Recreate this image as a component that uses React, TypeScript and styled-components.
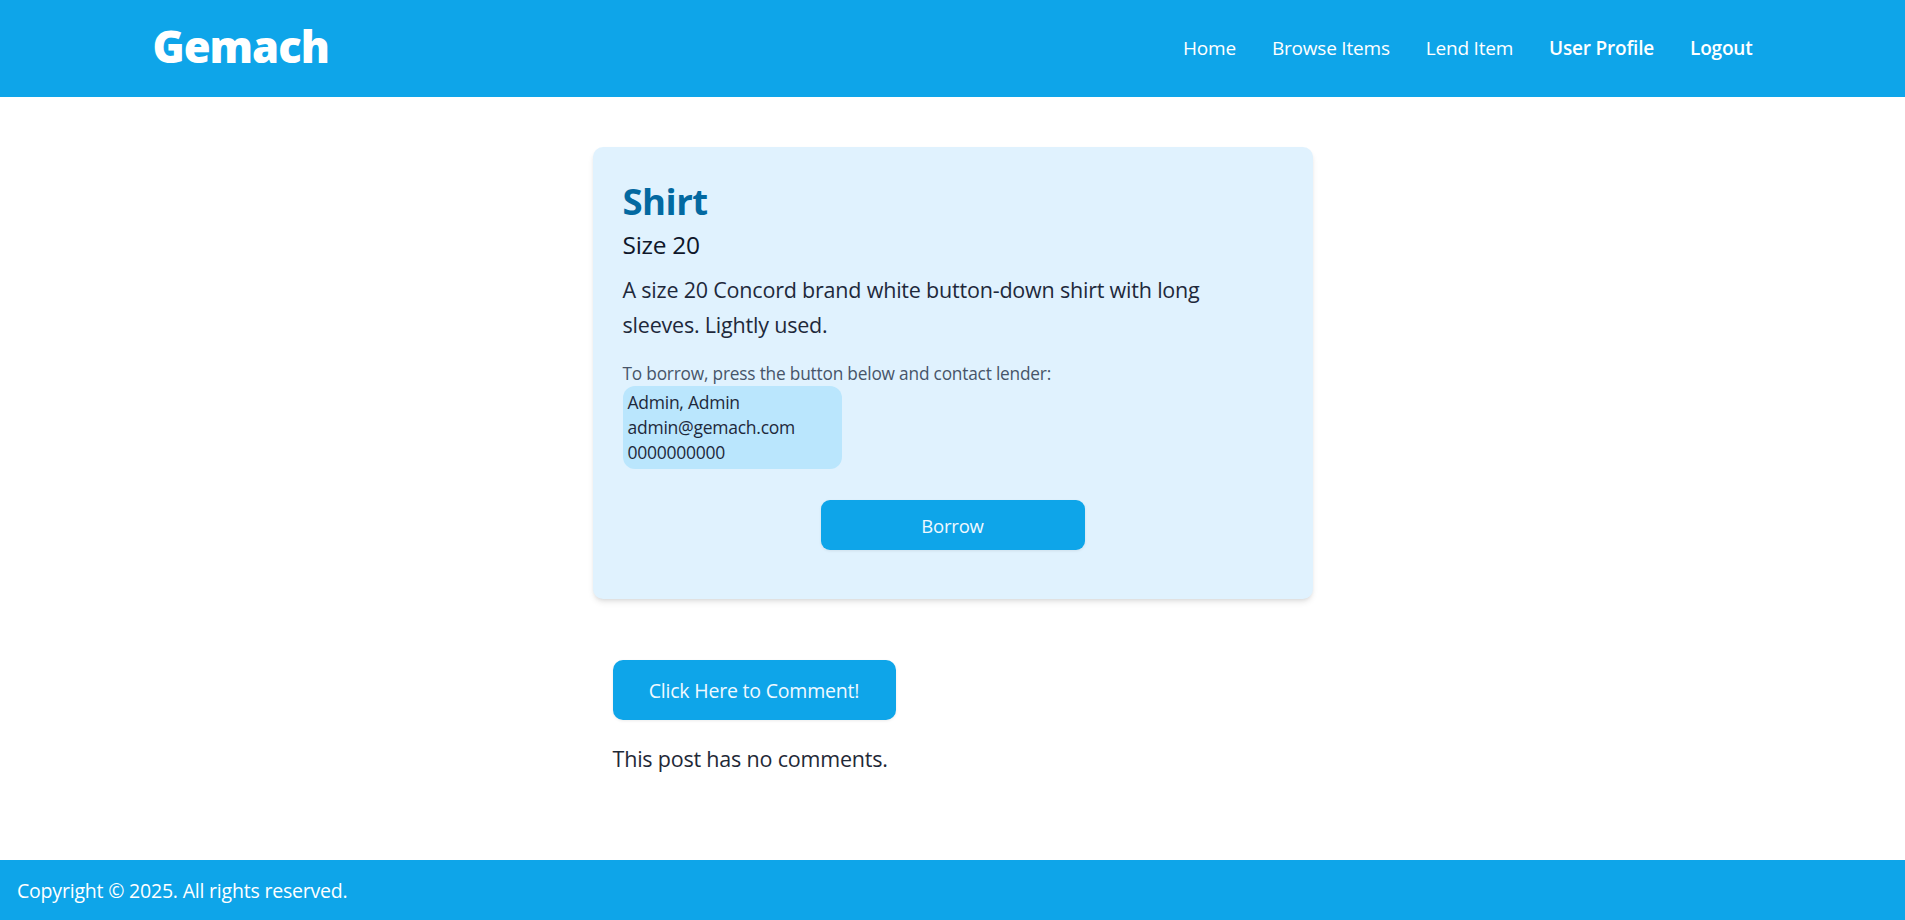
import React from "react";
import styled, { createGlobalStyle } from "styled-components";

const GlobalStyle = createGlobalStyle`
  * { box-sizing: border-box; }
  html, body { margin: 0; padding: 0; }
  body {
    font-family: "Open Sans", "Noto Sans", sans-serif;
    background: #ffffff;
    color: #1f2937;
  }
`;

const Page = styled.div`
  min-height: 100vh;
  display: flex;
  flex-direction: column;
`;

const Header = styled.header`
  background: #0ea5e9;
  height: 97px;
  display: flex;
  align-items: center;
`;

const HeaderInner = styled.div`
  width: 1600px;
  margin: 0 auto;
  display: flex;
  align-items: center;
  justify-content: space-between;
`;

const Logo = styled.a`
  font-family: "Open Sans", sans-serif;
  font-size: 43.5px;
  font-weight: 800;
  color: #ffffff;
  letter-spacing: -1px;
  text-decoration: none;
  line-height: 1;
  margin-top: -4px;
`;

const Nav = styled.nav`
  display: flex;
  align-items: center;
  gap: 36px;
  margin-top: -2px;
`;

const NavLink = styled.a<{ $strong?: boolean }>`
  color: #ffffff;
  font-size: 19px;
  font-weight: ${(p) => (p.$strong ? 600 : 500)};
  text-decoration: none;
  letter-spacing: -0.2px;
`;

const Main = styled.main`
  flex: 1;
  display: flex;
  flex-direction: column;
  align-items: center;
  padding-top: 50px;
`;

const Card = styled.section`
  width: 720px;
  background: #e0f2fe;
  border-radius: 10px;
  box-shadow: 0 4px 6px -1px rgba(0, 0, 0, 0.1), 0 2px 4px -2px rgba(0, 0, 0, 0.1);
  padding: 30px 30px 49px;
  display: flex;
  flex-direction: column;
`;

const Title = styled.h1`
  margin: 0;
  font-size: 36.5px;
  font-weight: 700;
  color: #0369a1;
  line-height: 48px;
  letter-spacing: -0.5px;
`;

const Subtitle = styled.h2`
  margin: 3px 0 0;
  font-size: 24.5px;
  font-weight: 500;
  color: #0f172a;
  line-height: 34px;
  letter-spacing: -0.3px;
`;

const Description = styled.p`
  margin: 10px 0 0;
  font-size: 21.5px;
  line-height: 35px;
  color: #1e293b;
  max-width: 650px;
  letter-spacing: -0.2px;
`;

const Instruction = styled.p`
  margin: 21px 0 0;
  font-size: 17.3px;
  font-weight: 500;
  line-height: 22px;
  color: #475569;
  letter-spacing: -0.2px;
`;

const ContactBox = styled.div`
  width: 219px;
  margin-top: 1px;
  background: #bae6fd;
  border-radius: 12px;
  padding: 4px 5px 4px;
  display: flex;
  flex-direction: column;
`;

const ContactLine = styled.span`
  font-size: 17.5px;
  line-height: 25px;
  color: #1e293b;
  letter-spacing: -0.25px;
`;

const ButtonRow = styled.div`
  display: flex;
  justify-content: center;
  margin-top: 31px;
`;

const PrimaryButton = styled.button<{ $w: number; $h: number; $fs: number; $radius: number }>`
  width: ${(p) => p.$w}px;
  height: ${(p) => p.$h}px;
  border: none;
  border-radius: ${(p) => p.$radius}px;
  background: #0ea5e9;
  color: #f0f9ff;
  font-family: "Open Sans", sans-serif;
  font-size: ${(p) => p.$fs}px;
  cursor: pointer;
  box-shadow: 0 1px 3px rgba(0, 0, 0, 0.08);
  letter-spacing: -0.2px;
`;

const CommentSection = styled.section`
  width: 720px;
  padding: 61px 20px 0;
  display: flex;
  flex-direction: column;
  align-items: flex-start;
`;

const EmptyText = styled.p`
  margin: 24px 0 0;
  font-size: 21.5px;
  line-height: 30px;
  color: #1f2937;
  letter-spacing: -0.2px;
`;

const Footer = styled.footer`
  background: #0ea5e9;
  height: 60px;
  display: flex;
  align-items: center;
  padding: 0 17px;
`;

const FooterText = styled.p`
  margin: 0;
  color: #ffffff;
  font-size: 19.5px;
  letter-spacing: -0.2px;
`;

export default function App() {
  return (
    <Page>
      <GlobalStyle />
      <Header>
        <HeaderInner>
          <Logo href="#">Gemach</Logo>
          <Nav>
            <NavLink href="#">Home</NavLink>
            <NavLink href="#">Browse Items</NavLink>
            <NavLink href="#">Lend Item</NavLink>
            <NavLink href="#" $strong>User Profile</NavLink>
            <NavLink href="#" $strong>Logout</NavLink>
          </Nav>
        </HeaderInner>
      </Header>
      <Main>
        <Card>
          <Title>Shirt</Title>
          <Subtitle>Size 20</Subtitle>
          <Description>
            A size 20 Concord brand white button-down shirt with long sleeves. Lightly used.
          </Description>
          <Instruction>To borrow, press the button below and contact lender:</Instruction>
          <ContactBox>
            <ContactLine>Admin, Admin</ContactLine>
            <ContactLine>admin@gemach.com</ContactLine>
            <ContactLine>0000000000</ContactLine>
          </ContactBox>
          <ButtonRow>
            <PrimaryButton $w={264} $h={50} $fs={18.5} $radius={9}>Borrow</PrimaryButton>
          </ButtonRow>
        </Card>
        <CommentSection>
          <PrimaryButton $w={283} $h={60} $fs={19.5} $radius={10}>Click Here to Comment!</PrimaryButton>
          <EmptyText>This post has no comments.</EmptyText>
        </CommentSection>
      </Main>
      <Footer>
        <FooterText>Copyright © 2025. All rights reserved.</FooterText>
      </Footer>
    </Page>
  );
}
